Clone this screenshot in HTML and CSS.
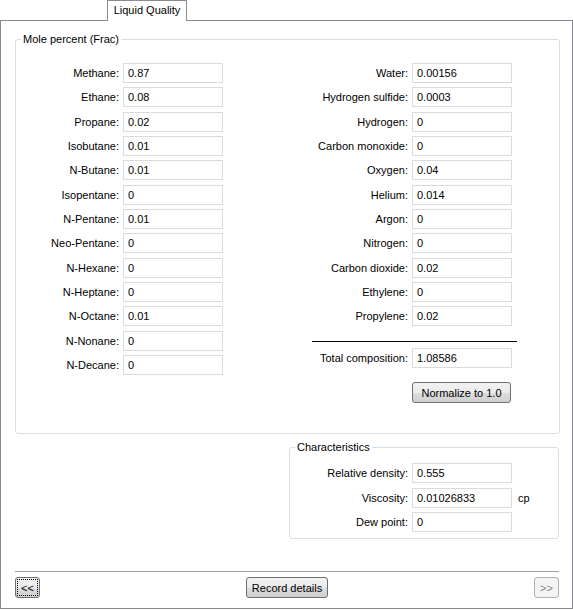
FILE: index.html
```html
<!DOCTYPE html>
<html>
<head>
  <title>Liquid Quality</title>
  <link rel="stylesheet" href="styles.css">
</head>
<body>
  <div class="tabs">
    <div class="tab">Liquid Quality</div>
  </div>

  <div class="panel">
    <div class="group mole">
      <span class="group-title">Mole percent (Frac)</span>
      <div class="cols">
        <div class="col left">
          <div class="row"><label>Methane:</label><input value="0.87"></div>
          <div class="row"><label>Ethane:</label><input value="0.08"></div>
          <div class="row"><label>Propane:</label><input value="0.02"></div>
          <div class="row"><label>Isobutane:</label><input value="0.01"></div>
          <div class="row"><label>N-Butane:</label><input value="0.01"></div>
          <div class="row"><label>Isopentane:</label><input value="0"></div>
          <div class="row"><label>N-Pentane:</label><input value="0.01"></div>
          <div class="row"><label>Neo-Pentane:</label><input value="0"></div>
          <div class="row"><label>N-Hexane:</label><input value="0"></div>
          <div class="row"><label>N-Heptane:</label><input value="0"></div>
          <div class="row"><label>N-Octane:</label><input value="0.01"></div>
          <div class="row"><label>N-Nonane:</label><input value="0"></div>
          <div class="row"><label>N-Decane:</label><input value="0"></div>
        </div>
        <div class="col right">
          <div class="row"><label>Water:</label><input value="0.00156"></div>
          <div class="row"><label>Hydrogen sulfide:</label><input value="0.0003"></div>
          <div class="row"><label>Hydrogen:</label><input value="0"></div>
          <div class="row"><label>Carbon monoxide:</label><input value="0"></div>
          <div class="row"><label>Oxygen:</label><input value="0.04"></div>
          <div class="row"><label>Helium:</label><input value="0.014"></div>
          <div class="row"><label>Argon:</label><input value="0"></div>
          <div class="row"><label>Nitrogen:</label><input value="0"></div>
          <div class="row"><label>Carbon dioxide:</label><input value="0.02"></div>
          <div class="row"><label>Ethylene:</label><input value="0"></div>
          <div class="row"><label>Propylene:</label><input value="0.02"></div>
          <div class="sum-line"></div>
          <div class="row total"><label>Total composition:</label><input value="1.08586"></div>
          <button class="btn normalize">Normalize to 1.0</button>
        </div>
      </div>
    </div>

    <div class="group chars">
      <span class="group-title">Characteristics</span>
      <div class="row"><label>Relative density:</label><input value="0.555"></div>
      <div class="row"><label>Viscosity:</label><input value="0.01026833"><span class="unit">cp</span></div>
      <div class="row"><label>Dew point:</label><input value="0"></div>
    </div>

    <div class="footer">
      <button class="btn nav focus">&lt;&lt;</button>
      <button class="btn record">Record details</button>
      <button class="btn nav" disabled>&gt;&gt;</button>
    </div>
  </div>
</body>
</html>
```

FILE: styles.css
```css
* {
  box-sizing: border-box;
}
body {
  margin: 0;
  background: #fff;
  color: #000;
  font-family: "Liberation Sans", Arial, sans-serif;
  font-size: 11px;
  width: 573px;
}
.tabs {
  height: 20px;
  padding-left: 107px;
}
.tab {
  position: relative;
  width: 80px;
  height: 21px;
  border: 1px solid #898c95;
  border-bottom: none;
  background: #fff;
  text-align: center;
  line-height: 19px;
}
.panel {
  display: flex;
  flex-direction: column;
  width: 573px;
  height: 589px;
  border: 1px solid #898c95;
}
.group {
  position: relative;
  border: 1px solid #d5dfe5;
  border-radius: 3px;
}
.group-title {
  position: absolute;
  top: -7px;
  left: 5px;
  padding: 0 2px;
  line-height: 13px;
  background: #fff;
}
.mole {
  margin: 18px 0 0 14px;
  width: 545px;
  height: 395px;
  padding-top: 23px;
}
.cols {
  display: flex;
}
.col {
  display: flex;
  flex-direction: column;
  gap: 4.33px;
}
.left {
  width: 207px;
}
.right {
  width: 289px;
}
.row {
  display: flex;
  align-items: center;
  height: 20px;
}
.row label {
  text-align: right;
  padding-right: 4px;
}
.left label {
  width: 107px;
}
.right label {
  width: 189px;
}
.row input {
  width: 100px;
  height: 20px;
  border: 1px solid #d9dcdf;
  padding: 0 4px;
  font: inherit;
  color: #000;
  outline: none;
}
.sum-line {
  flex: none;
  margin: 10px 0 2px 89px;
  width: 205px;
  border-top: 1px solid #000;
}
.btn {
  height: 21px;
  border: 1px solid #707070;
  border-radius: 3px;
  background: linear-gradient(#f2f2f2 0%, #ebebeb 50%, #dddddd 51%, #cfcfcf 100%);
  font: inherit;
  color: #000;
  padding: 0;
}
.normalize {
  align-self: flex-end;
  width: 99px;
  margin: 10px 1px 0 0;
}
.chars {
  margin: 13px 0 0 288px;
  width: 270px;
  height: 92px;
  padding-top: 15px;
  display: flex;
  flex-direction: column;
  gap: 4.5px;
}
.chars label {
  width: 122px;
}
.unit {
  margin-left: 6px;
}
.footer {
  margin: auto 0 0 14px;
  width: 544px;
  padding: 5px 0 10px;
  border-top: 1px solid #a0a0a0;
  display: flex;
  justify-content: space-between;
}
.nav {
  width: 25px;
}
.focus {
  outline: 1px dotted #000;
  outline-offset: -3px;
}
.record {
  width: 82px;
}
.btn:disabled {
  border-color: #adb2b5;
  background: #f4f4f4;
  color: #838383;
}
```
